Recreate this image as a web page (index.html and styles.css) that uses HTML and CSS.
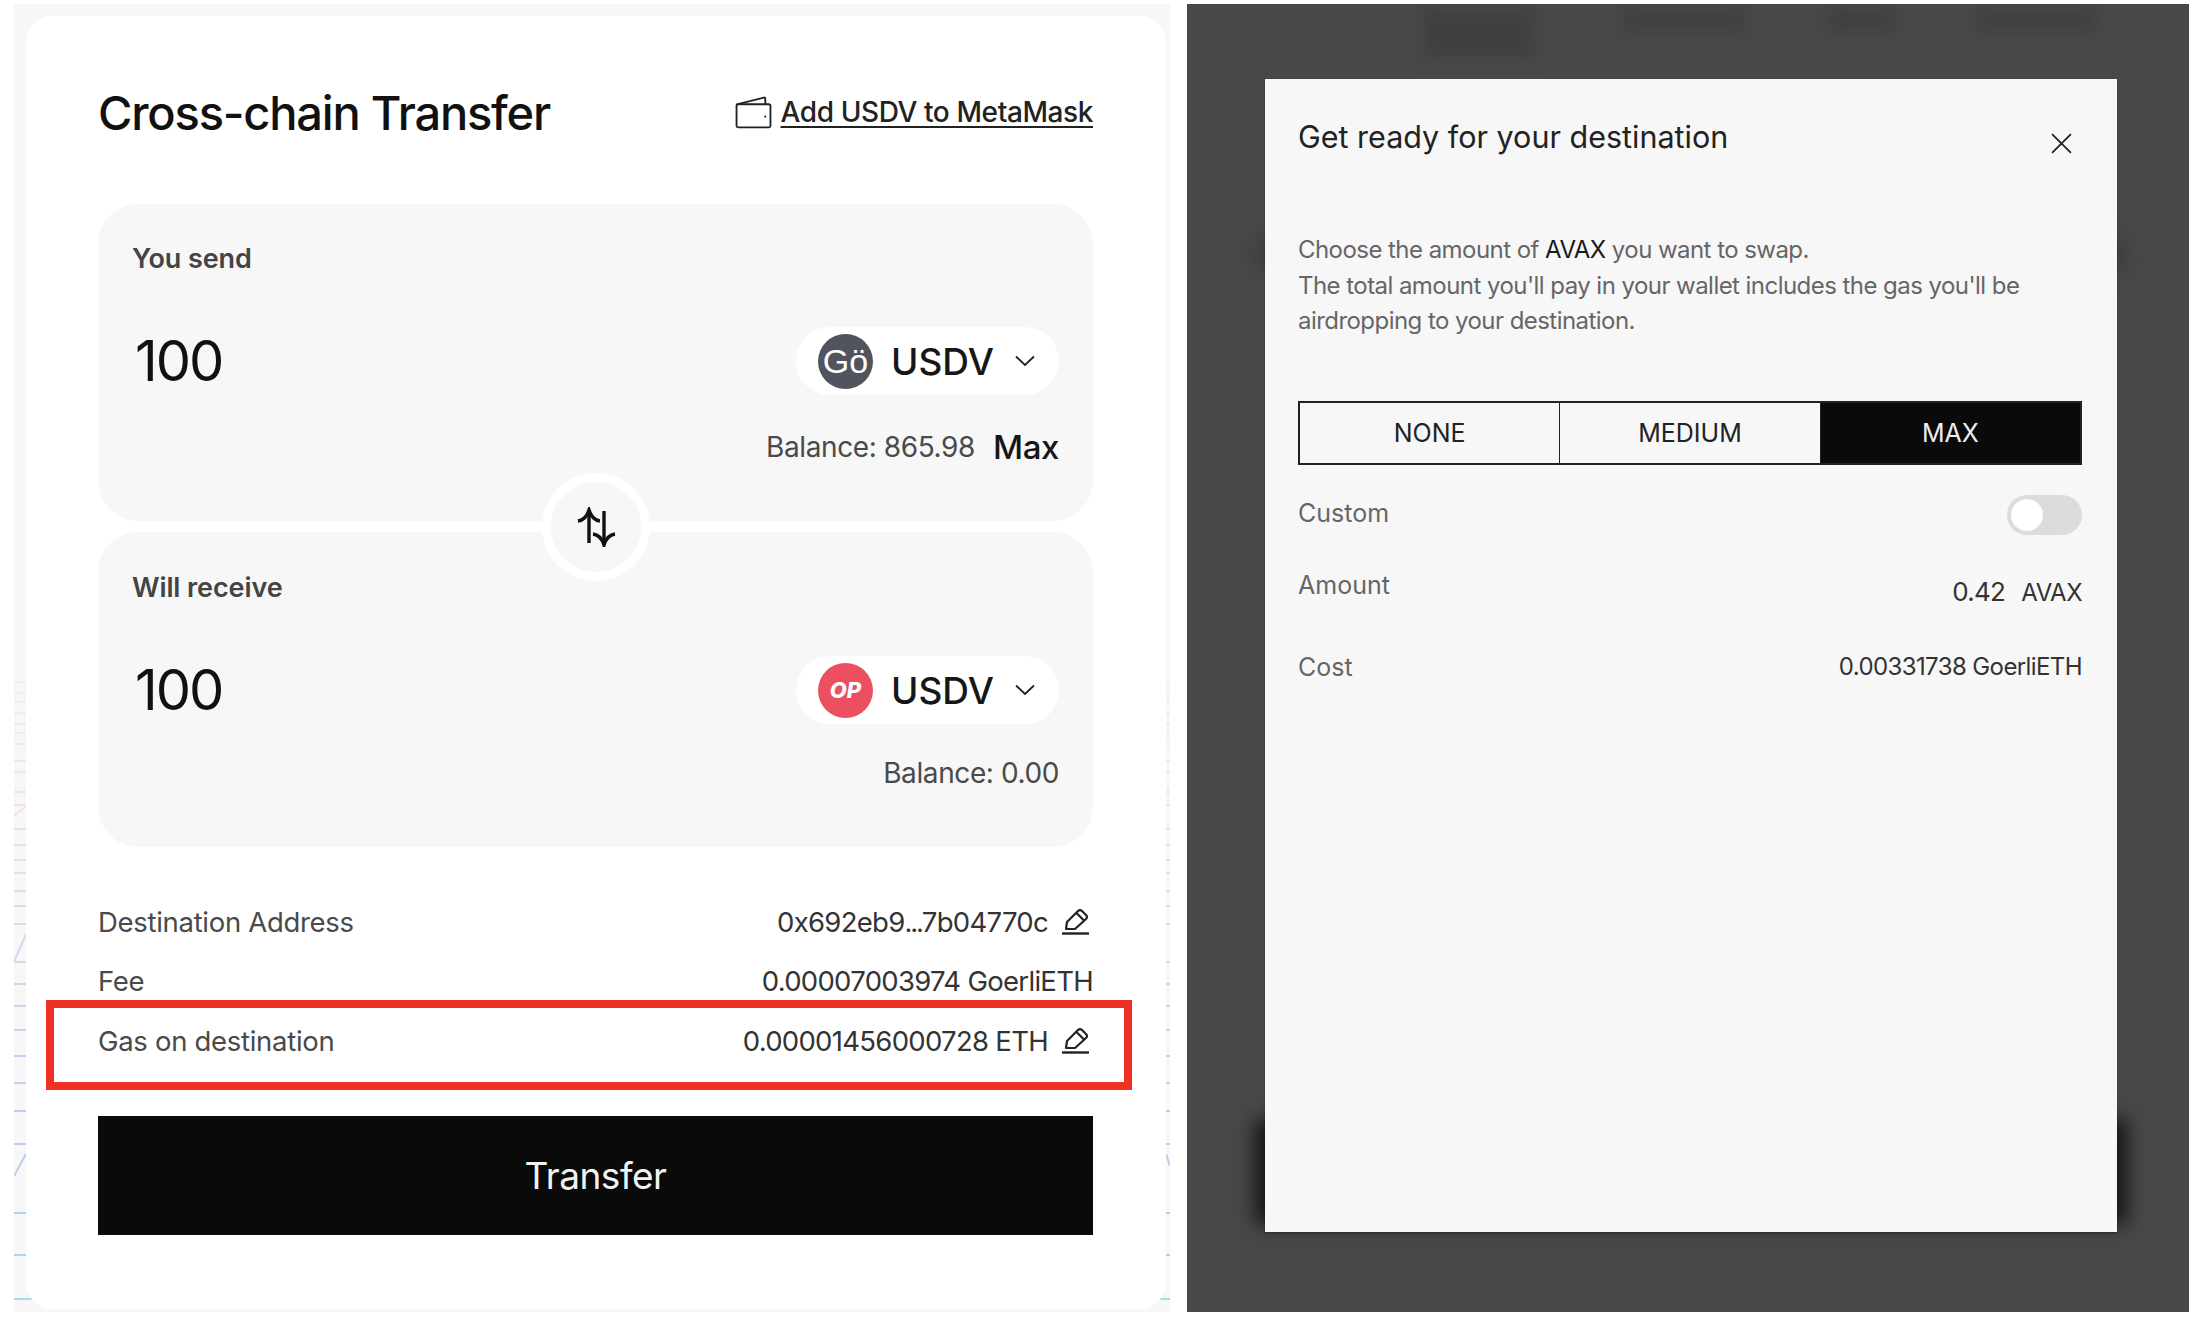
FILE: index.html
```html
<!DOCTYPE html>
<html lang="en">
<head>
  <meta charset="UTF-8">
  <title>Cross-chain Transfer</title>
  <meta name="viewport" content="width=device-width, initial-scale=1.0">
  <link rel="stylesheet" href="styles.css">
</head>
<body>

  <section class="transfer-panel">
    <svg class="chart-lines" viewBox="0 0 1156 1308" fill="none" stroke-width="2">
      <defs>
        <linearGradient id="lineFade" gradientUnits="userSpaceOnUse" x1="0" y1="670" x2="0" y2="1300">
          <stop offset="0" stop-color="#f3f0f2"/>
          <stop offset="0.25" stop-color="#f2dcea"/>
          <stop offset="0.55" stop-color="#d6cdef"/>
          <stop offset="0.75" stop-color="#bccdef"/>
          <stop offset="1" stop-color="#a5dcea"/>
        </linearGradient>
      </defs>
      <path stroke="url(#lineFade)" d="M0 678H1156M0 689H1156M0 698H1156M0 709H1156M0 720H1156M0 729H1156M0 740H1156M0 757H1156M0 768H1156M0 788H1156M0 801H1156M0 825H1156M0 841H1156M0 856H1156M0 869H1156M0 887H1156M0 902H1156M0 920H1156M0 958H1156M0 980H1156M0 1002H1156M0 1026H1156M0 1052H1156M0 1079H1156M0 1107H1156M0 1140H1156M0 1209H1156M0 1251H1156M0 1295H1156M0 812L12 802M0 958L12 930M0 1172L12 1150M1152 1150L1156 1162"/>
    </svg>
    <div class="transfer-card">
      <header class="card-head">
        <h1>Cross-chain Transfer</h1>
        <a class="add-link">
          <svg class="wallet-icon" viewBox="0 0 36 32" fill="none" stroke="#222" stroke-width="1.8" stroke-linejoin="round" stroke-linecap="round">
            <path d="M1.500 9.500 V29 q0 1.500 1.500 1.500 H33 q1.500 0 1.500-1.500 V9.500 q0-1.500-1.500-1.500 H3 q-1.500 0-1.500 1.500 Z"/>
            <path d="M2 8 L28 1.500 q1.500-.3 1.500 1.200 V8"/>
            <circle cx="29.500" cy="20" r="1" fill="#222" stroke="none"/>
          </svg>
          <span>Add USDV to MetaMask</span>
        </a>
      </header>

      <div class="token-box send-box">
        <div class="box-label">You send</div>
        <div class="box-main">
          <span class="amount">100</span>
          <div class="token-pill">
            <span class="chain-icon chain-go">Gö</span>
            <span class="token-name">USDV</span>
            <svg class="chevron" viewBox="0 0 20 12" fill="none" stroke="#222" stroke-width="1.8"><path d="M1 1.500 L10 10 L19 1.500"/></svg>
          </div>
        </div>
        <div class="box-balance">Balance: 865.98 <b class="max-btn">Max</b></div>
      </div>

      <div class="swap-btn">
        <svg viewBox="0 0 40 40" fill="none" stroke="#111" stroke-width="3.400">
          <path d="M13 36 V3"/>
          <path d="M2 14 Q10 13 13 3 Q16 13 24 14"/>
          <path d="M28 4 V38"/>
          <path d="M17 27 Q25 28 28 38 Q31 28 39 27"/>
        </svg>
      </div>

      <div class="token-box receive-box">
        <div class="box-label">Will receive</div>
        <div class="box-main">
          <span class="amount">100</span>
          <div class="token-pill">
            <span class="chain-icon chain-op">OP</span>
            <span class="token-name">USDV</span>
            <svg class="chevron" viewBox="0 0 20 12" fill="none" stroke="#222" stroke-width="1.8"><path d="M1 1.500 L10 10 L19 1.500"/></svg>
          </div>
        </div>
        <div class="box-balance">Balance: 0.00</div>
      </div>

      <div class="info-rows">
        <div class="info-row">
          <span>Destination Address</span>
          <span class="info-value">
            <span>0x692eb9<span class="dots">...</span>7b04770c</span>
            <svg class="edit-icon" viewBox="0 0 28 28" fill="none" stroke="#222" stroke-width="2.200" stroke-linejoin="round"><path d="M5 21 L6 14 L17 3 Q19 1 21 3 L25 7 Q27 9 25 11 L14 21 Z"/><path d="M15.500 5 L23 12.500"/><path d="M1 25.500 H28" stroke-width="2.400"/></svg>
          </span>
        </div>
        <div class="info-row">
          <span>Fee</span>
          <span class="info-value">0.00007003974 GoerliETH</span>
        </div>
        <div class="info-row gas-row">
          <span>Gas on destination</span>
          <span class="info-value">0.00001456000728 ETH
            <svg class="edit-icon" viewBox="0 0 28 28" fill="none" stroke="#222" stroke-width="2.200" stroke-linejoin="round"><path d="M5 21 L6 14 L17 3 Q19 1 21 3 L25 7 Q27 9 25 11 L14 21 Z"/><path d="M15.500 5 L23 12.500"/><path d="M1 25.500 H28" stroke-width="2.400"/></svg>
          </span>
          <div class="red-mark"></div>
        </div>
      </div>

      <button class="transfer-btn">Transfer</button>
    </div>
  </section>

  <section class="dark-panel">
    <i class="blur-bit bit-a"></i>
    <i class="blur-bit bit-b"></i>
    <i class="blur-bit bit-c"></i>
    <i class="blur-bit bit-d"></i>
    <i class="modal-glow glow-top"></i>
    <i class="modal-glow glow-low"></i>

    <div class="modal">
      <div class="modal-head">
        <h2>Get ready for your destination</h2>
        <svg class="close-icon" viewBox="0 0 20 20" fill="none" stroke="#222" stroke-width="1.700"><path d="M1 1 L19 19 M19 1 L1 19"/></svg>
      </div>

      <p class="modal-text">Choose the amount of <b>AVAX</b> you want to swap.<br>The total amount you'll pay in your wallet includes the gas you'll be<br>airdropping to your destination.</p>

      <div class="segments">
        <div class="segment">NONE</div>
        <div class="segment">MEDIUM</div>
        <div class="segment active">MAX</div>
      </div>

      <div class="modal-row custom-row">
        <span class="custom-label">Custom</span>
        <span class="toggle"><i></i></span>
      </div>
      <div class="modal-row amount-row">
        <span>Amount</span>
        <span class="amount-value"><b>0.42</b> AVAX</span>
      </div>
      <div class="modal-row cost-row">
        <span>Cost</span>
        <span class="cost-value">0.00331738 GoerliETH</span>
      </div>
    </div>
  </section>

</body>
</html>
```

FILE: styles.css
```css
* {
  box-sizing: border-box;
}
body {
  margin: 0;
  width: 2194px;
  height: 1330px;
  overflow: hidden;
  background-color: white;
  color: #111;
  font-family: Inter, 'Liberation Sans', sans-serif;
  display: flex;
  align-items: flex-start;
  padding: 4px 0 0 14px;
  gap: 17px;
}

/* left screenshot */
.transfer-panel {
  position: relative;
  width: 1156px;
  height: 1308px;
  padding: 12px 4px 3px 12px;
  background-color: #f7f7f7;
}
.chart-lines {
  position: absolute;
  left: 0;
  top: 0;
  width: 1156px;
  height: 1308px;
}
.transfer-card {
  position: relative;
  height: 100%;
  padding: 64px 73px 0 72px;
  background-color: white;
  border-radius: 26px;
}
.card-head {
  display: flex;
  justify-content: space-between;
  align-items: center;
  height: 64px;
  margin-bottom: 60px;
}
h1 {
  margin: 0;
  font-size: 47px;
  font-weight: 500;
  letter-spacing: -1.2px;
}
.add-link {
  display: flex;
  align-items: center;
  gap: 9px;
  font-size: 28px;
  font-weight: 500;
  color: #222;
}
.add-link span {
  text-decoration: underline;
  text-underline-offset: 4px;
  letter-spacing: -0.4px;
}
.wallet-icon {
  width: 37px;
  height: 33px;
}

.token-box {
  height: 317px;
  padding: 39px 34px 0;
  background-color: #f7f7f7;
  border-radius: 40px;
}
.receive-box {
  height: 315px;
  margin-top: 11px;
  padding-top: 40px;
}
.box-label {
  font-size: 27px;
  font-weight: 600;
  color: #444;
  line-height: 32px;
  letter-spacing: -0.1px;
}
.box-main {
  display: flex;
  justify-content: space-between;
  align-items: center;
  margin-top: 52px;
  height: 68px;
}
.amount {
  font-size: 56px;
  color: #111;
  letter-spacing: -2px;
  margin-left: 3px;
}
.token-pill {
  display: flex;
  align-items: center;
  width: 263px;
  height: 68px;
  padding: 0 24px 0 22px;
  background-color: white;
  border-radius: 34px;
}
.chain-icon {
  display: flex;
  align-items: center;
  justify-content: center;
  width: 55px;
  height: 55px;
  border-radius: 50%;
  color: white;
  flex-shrink: 0;
}
.chain-go {
  background-color: #51545c;
  font-size: 34px;
  font-family: 'Liberation Sans', sans-serif;
}
.chain-op {
  background-color: #ec5060;
  font-size: 22px;
  font-weight: 800;
  font-style: italic;
}
.token-name {
  margin-left: 18px;
  font-size: 37px;
  font-weight: 500;
  color: #161616;
}
.chevron {
  width: 20px;
  height: 12px;
  margin-left: auto;
}
.box-balance {
  display: flex;
  justify-content: flex-end;
  align-items: center;
  gap: 18px;
  margin-top: 32px;
  font-size: 28px;
  color: #4a4a4a;
  letter-spacing: -0.4px;
}
.max-btn {
  font-size: 33px;
  font-weight: 500;
  color: #161616;
}

.swap-btn {
  position: absolute;
  left: 516px;
  top: 457px;
  width: 108px;
  height: 108px;
  padding: 25px;
  background-color: #f7f7f7;
  border: 9px solid white;
  border-radius: 50%;
}
.swap-btn svg {
  display: block;
  width: 100%;
  height: 100%;
}

.info-rows {
  margin-top: 45px;
}
.info-row {
  position: relative;
  display: flex;
  justify-content: space-between;
  align-items: center;
  height: 59.5px;
  font-size: 27.500px;
  color: #4a4a4a;
  letter-spacing: -0.3px;
}
.info-value {
  display: flex;
  align-items: center;
  gap: 13px;
  color: #333;
  letter-spacing: -0.7px;
}
.dots {
  letter-spacing: -2.200px;
}
.edit-icon {
  width: 28px;
  height: 28px;
  margin-right: 4px;
}
.red-mark {
  position: absolute;
  left: -52px;
  right: -39px;
  top: -11px;
  bottom: -19px;
  border: 8px solid #ee3124;
}
.transfer-btn {
  display: block;
  width: 100%;
  height: 119px;
  margin-top: 45px;
  background-color: #0a0a0a;
  color: #f2f2f2;
  font-family: inherit;
  font-size: 37px;
  letter-spacing: -0.5px;
  border: none;
}

/* right screenshot */
.dark-panel {
  position: relative;
  width: 1002px;
  height: 1308px;
  padding: 75px 72px 0 78px;
  background-color: #484848;
  overflow: hidden;
}
.blur-bit {
  position: absolute;
  height: 24px;
  background-color: #404040;
  filter: blur(7px);
}
.bit-a {
  left: 235px;
  top: 4px;
  width: 112px;
  height: 50px;
}
.bit-b {
  left: 435px;
  top: 4px;
  width: 124px;
}
.bit-c {
  left: 641px;
  top: 4px;
  width: 66px;
}
.bit-d {
  left: 791px;
  top: 4px;
  width: 118px;
}
.modal-glow {
  position: absolute;
  left: 69px;
  width: 870px;
  filter: blur(10px);
}
.glow-top {
  top: 235px;
  height: 30px;
  background-color: #3c3c3c;
}
.glow-low {
  top: 1115px;
  height: 105px;
  background-color: #111;
}
.modal {
  position: relative;
  height: 1153px;
  padding: 0 35px 0 33px;
  background-color: #f7f7f7;
  box-shadow: 0 1px 2px rgba(0, 0, 0, 0.3);
}
.modal-head {
  display: flex;
  justify-content: space-between;
  height: 153px;
  padding-top: 38px;
}
h2 {
  margin: 0;
  font-size: 30.500px;
  font-weight: 400;
  line-height: 40px;
  color: #222;
}
.close-icon {
  width: 21px;
  height: 21px;
  margin: 16px 10px 0 0;
}
.modal-text {
  margin: 0;
  font-size: 24px;
  line-height: 35.500px;
  letter-spacing: -0.55px;
  color: #666;
}
.modal-text b {
  font-weight: 400;
  color: #1a1a1a;
}
.segments {
  display: flex;
  height: 64px;
  margin-top: 62px;
  border: 2px solid #222;
}
.segment {
  flex: 1;
  display: flex;
  align-items: center;
  justify-content: center;
  font-size: 25px;
  color: #222;
  border-left: 1px solid #222;
}
.segment:first-child {
  border-left: none;
}
.segment.active {
  background-color: #0a0a0a;
  color: #eee;
}
.modal-row {
  display: flex;
  justify-content: space-between;
  font-size: 25px;
  color: #666;
}
.custom-row {
  align-items: center;
  height: 40px;
  margin-top: 30px;
}
.custom-label {
  padding-bottom: 4px;
}
.toggle {
  display: block;
  width: 75px;
  height: 40px;
  padding: 4px;
  background-color: #dcdcdc;
  border-radius: 20px;
}
.toggle i {
  display: block;
  width: 32px;
  height: 32px;
  background-color: white;
  border-radius: 50%;
}
.amount-row {
  margin-top: 35px;
  height: 50px;
}
.amount-value {
  color: #333;
  font-size: 24px;
  letter-spacing: -0.5px;
  padding-top: 6px;
}
.amount-value b {
  font-weight: 400;
  font-size: 26px;
  letter-spacing: -0.8px;
  margin-right: 10px;
}
.cost-row {
  margin-top: 32px;
}
.cost-value {
  color: #333;
  font-size: 24px;
  letter-spacing: -0.6px;
}
```
